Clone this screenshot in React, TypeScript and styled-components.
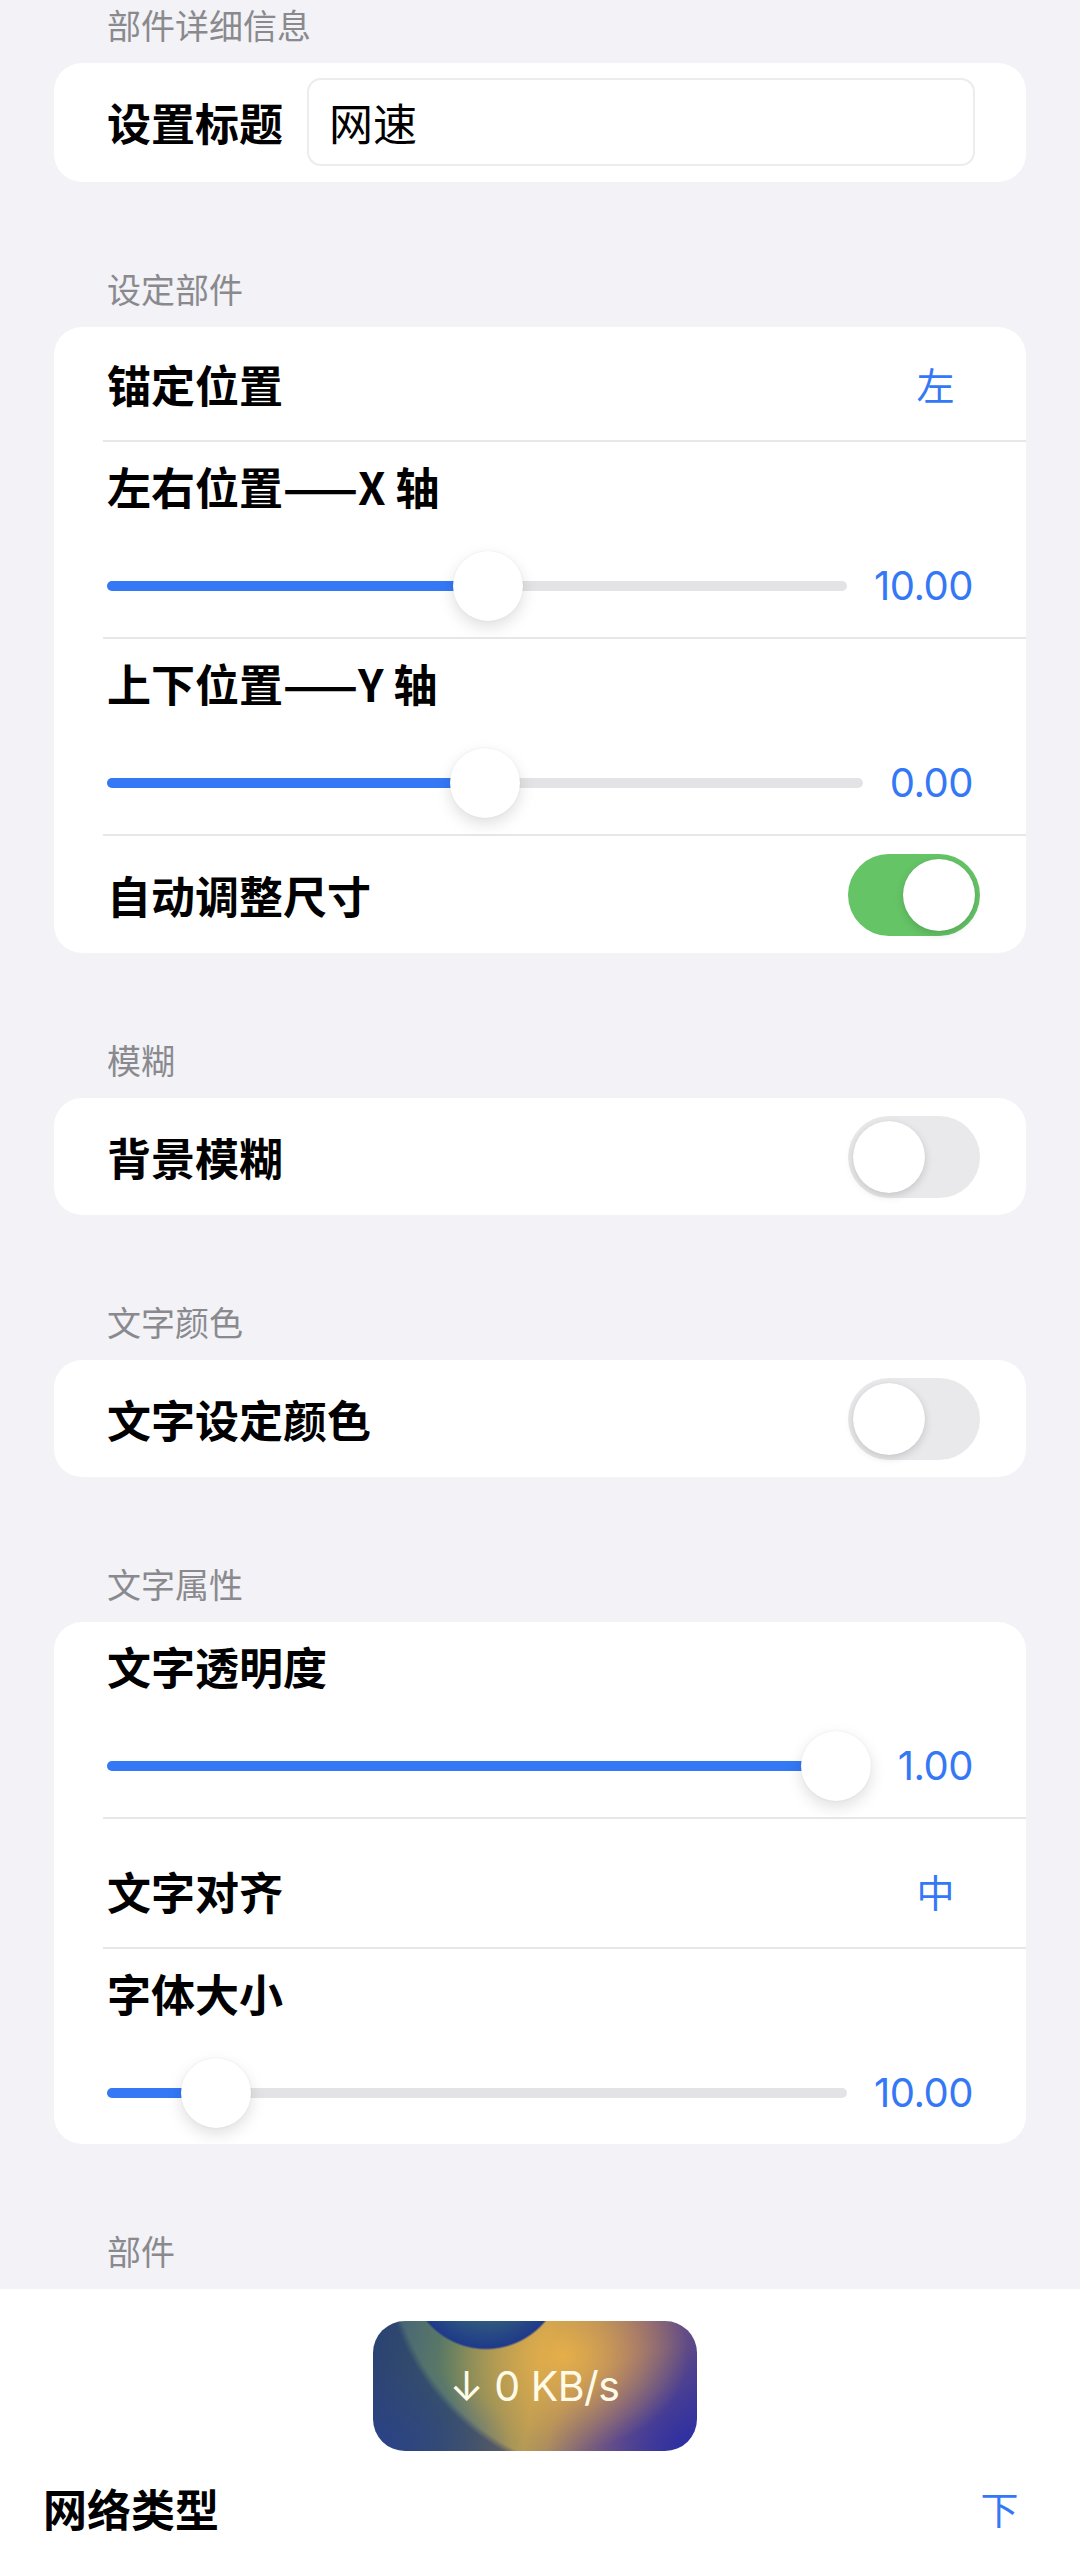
import React from "react";
import styled, { createGlobalStyle } from "styled-components";

const GlobalStyle = createGlobalStyle`
  html, body {
    margin: 0;
    padding: 0;
    background: #f2f2f7;
  }
  body {
    font-family: "Noto Sans CJK SC", "Noto Sans", sans-serif;
    color: #000;
  }
  * {
    box-sizing: border-box;
  }
`;

const Page = styled.div`
  width: 1080px;
  height: 2565px;
  overflow: hidden;
  padding: 5px 54px 0;
  display: flex;
  flex-direction: column;
`;

const Section = styled.section`
  & + & {
    margin-top: 87px;
  }
`;

const SectionHeader = styled.div`
  font-size: 34px;
  line-height: 40px;
  color: #8a8a8e;
  padding-left: 53px;
  margin-bottom: 18px;
`;

const Card = styled.div`
  background: #fff;
  border-radius: 28px;
  overflow: hidden;
`;

const Divider = styled.div`
  height: 2px;
  margin-left: 49px;
  background: #e7e7ea;
`;

const Label = styled.div`
  font-size: 44px;
  line-height: 60px;
  font-weight: 700;
  white-space: nowrap;
`;

const TitleRow = styled.div`
  display: flex;
  align-items: center;
  gap: 24px;
  padding: 15px 51px 16px 53px;
`;

const TextField = styled.div`
  flex: 1;
  height: 88px;
  border: 2px solid #ececef;
  border-radius: 14px;
  padding-left: 20px;
  display: flex;
  align-items: center;
  font-size: 44px;
`;

const ValueRow = styled.div<{ $tall?: boolean }>`
  height: ${(p) => (p.$tall ? 128 : 113)}px;
  padding: ${(p) => (p.$tall ? "16px" : "0")} 72px 0 53px;
  display: flex;
  align-items: center;
  justify-content: space-between;
`;

const BlueValue = styled.div`
  font-family: Inter, "Noto Sans CJK SC", sans-serif;
  font-size: 40px;
  line-height: 60px;
  color: #3478f6;
  letter-spacing: -0.5px;
`;

const PickerValue = styled(BlueValue)`
  font-family: "Noto Sans CJK SC", sans-serif;
  font-size: 38px;
`;

const SliderRow = styled.div`
  padding: 14px 53px 17px;
`;

const SliderLine = styled.div`
  margin-top: 36px;
  height: 68px;
  display: flex;
  align-items: center;
  gap: 27px;
`;

const Track = styled.div`
  position: relative;
  flex: 1;
  height: 10px;
  border-radius: 5px;
  background: #e3e3e6;
`;

const Fill = styled.div`
  height: 100%;
  border-radius: 5px;
  background: #3478f6;
`;

const Thumb = styled.div`
  position: absolute;
  top: 50%;
  width: 70px;
  height: 70px;
  margin-top: -35px;
  border-radius: 50%;
  background: #fff;
  box-shadow: 0 6px 16px rgba(0, 0, 0, 0.13), 0 0 2px rgba(0, 0, 0, 0.08);
`;

const ToggleRow = styled.div`
  height: 117px;
  padding: 0 46px 0 53px;
  display: flex;
  align-items: center;
  justify-content: space-between;
`;

const ToggleTrack = styled.div<{ $on: boolean }>`
  width: 132px;
  height: 82px;
  border-radius: 41px;
  padding: 5px;
  display: flex;
  justify-content: ${(p) => (p.$on ? "flex-end" : "flex-start")};
  background: ${(p) => (p.$on ? "#65c466" : "#e9e9eb")};
`;

const Knob = styled.div`
  width: 72px;
  height: 72px;
  border-radius: 50%;
  background: #fff;
  box-shadow: 0 3px 8px rgba(0, 0, 0, 0.15), 0 0 1px rgba(0, 0, 0, 0.1);
`;

const PreviewPanel = styled.div`
  flex: 1;
  margin: 0 -54px;
  background: #fff;
  padding: 32px 62px 0 43px;
  display: flex;
  flex-direction: column;
`;

const Widget = styled.div`
  align-self: center;
  margin-right: -8px;
  width: 324px;
  height: 130px;
  border-radius: 32px;
  display: flex;
  align-items: center;
  justify-content: center;
  color: #fffbe8;
  font-family: Inter, "Noto Sans", sans-serif;
  font-size: 41px;
  font-weight: 400;
  letter-spacing: -0.5px;
  background:
    radial-gradient(circle 79px at 113px -49px, #426f68 0%, #33607a 55%, #1f3a8a 96%, transparent 99%),
    radial-gradient(circle 235px at 245px -75px, transparent 97%, rgba(22, 40, 105, 0.5) 100%),
    radial-gradient(ellipse 125px 95px at 190px 35px, rgba(232, 176, 72, 0.95), rgba(232, 176, 72, 0) 100%),
    radial-gradient(ellipse 150px 105px at 324px 130px, rgba(40, 44, 165, 0.95), rgba(40, 44, 165, 0) 100%),
    radial-gradient(ellipse 140px 90px at 0px 130px, rgba(62, 92, 170, 0.9), rgba(62, 92, 170, 0) 100%),
    linear-gradient(100deg, #3d5c7e 0%, #5f7d62 25%, #b69a55 50%, #8c6476 75%, #4b3f8e 100%);
`;

const NetRow = styled.div`
  margin-top: 27px;
  display: flex;
  align-items: center;
  justify-content: space-between;
`;

interface SliderProps {
  label: string;
  value: string;
  frac: number;
}

function Slider({ label, value, frac }: SliderProps) {
  return (
    <SliderRow>
      <Label>{label}</Label>
      <SliderLine>
        <Track>
          <Fill style={{ width: `calc(35px + (100% - 70px) * ${frac})` }} />
          <Thumb style={{ left: `calc((100% - 70px) * ${frac})` }} />
        </Track>
        <BlueValue>{value}</BlueValue>
      </SliderLine>
    </SliderRow>
  );
}

function Toggle({ label, on }: { label: string; on: boolean }) {
  return (
    <ToggleRow>
      <Label>{label}</Label>
      <ToggleTrack $on={on}>
        <Knob />
      </ToggleTrack>
    </ToggleRow>
  );
}

export default function App() {
  return (
    <>
      <GlobalStyle />
      <Page>
        <Section>
          <SectionHeader>部件详细信息</SectionHeader>
          <Card>
            <TitleRow>
              <Label>设置标题</Label>
              <TextField>网速</TextField>
            </TitleRow>
          </Card>
        </Section>

        <Section>
          <SectionHeader>设定部件</SectionHeader>
          <Card>
            <ValueRow>
              <Label>锚定位置</Label>
              <PickerValue>左</PickerValue>
            </ValueRow>
            <Divider />
            <Slider label="左右位置——X 轴" value="10.00" frac={0.517} />
            <Divider />
            <Slider label="上下位置——Y 轴" value="0.00" frac={0.5} />
            <Divider />
            <Toggle label="自动调整尺寸" on />
          </Card>
        </Section>

        <Section>
          <SectionHeader>模糊</SectionHeader>
          <Card>
            <Toggle label="背景模糊" on={false} />
          </Card>
        </Section>

        <Section>
          <SectionHeader>文字颜色</SectionHeader>
          <Card>
            <Toggle label="文字设定颜色" on={false} />
          </Card>
        </Section>

        <Section>
          <SectionHeader>文字属性</SectionHeader>
          <Card>
            <Slider label="文字透明度" value="1.00" frac={1} />
            <Divider />
            <ValueRow $tall>
              <Label>文字对齐</Label>
              <PickerValue>中</PickerValue>
            </ValueRow>
            <Divider />
            <Slider label="字体大小" value="10.00" frac={0.11} />
          </Card>
        </Section>

        <Section>
          <SectionHeader>部件</SectionHeader>
        </Section>
        <PreviewPanel>
          <Widget>↓ 0 KB/s</Widget>
          <NetRow>
            <Label>网络类型</Label>
            <PickerValue>下</PickerValue>
          </NetRow>
        </PreviewPanel>
      </Page>
    </>
  );
}
